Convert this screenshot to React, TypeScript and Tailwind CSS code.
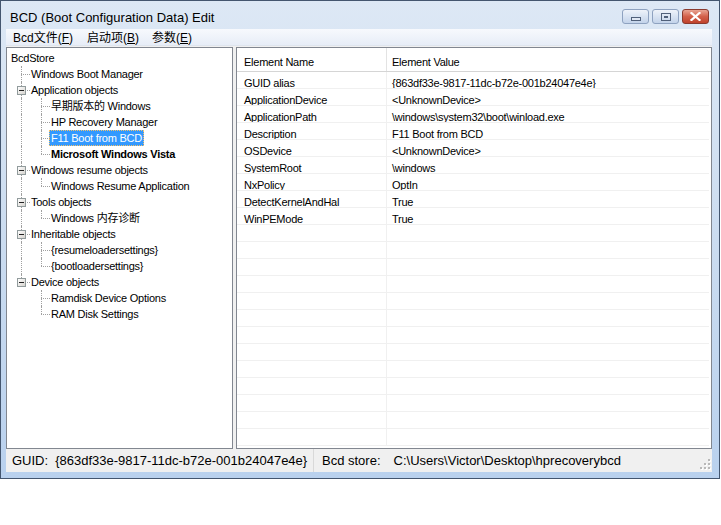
import React from "react";

type Guide = "none" | "pipe" | "tee" | "ell";

type TreeRow = {
  text: string;
  guides: Guide[];
  expander?: boolean;
  bold?: boolean;
  selected?: boolean;
};

const treeRows: TreeRow[] = [
  { text: "BcdStore", guides: [] },
  { text: "Windows Boot Manager", guides: ["tee"] },
  { text: "Application objects", guides: ["tee"], expander: true },
  { text: "早期版本的 Windows", guides: ["pipe", "tee"] },
  { text: "HP Recovery Manager", guides: ["pipe", "tee"] },
  { text: "F11 Boot from BCD", guides: ["pipe", "tee"], selected: true },
  { text: "Microsoft Windows Vista", guides: ["pipe", "ell"], bold: true },
  { text: "Windows resume objects", guides: ["tee"], expander: true },
  { text: "Windows Resume Application", guides: ["pipe", "ell"] },
  { text: "Tools objects", guides: ["tee"], expander: true },
  { text: "Windows 内存诊断", guides: ["pipe", "ell"] },
  { text: "Inheritable objects", guides: ["tee"], expander: true },
  { text: "{resumeloadersettings}", guides: ["pipe", "tee"] },
  { text: "{bootloadersettings}", guides: ["pipe", "ell"] },
  { text: "Device objects", guides: ["ell"], expander: true },
  { text: "Ramdisk Device Options", guides: ["none", "tee"] },
  { text: "RAM Disk Settings", guides: ["none", "ell"] },
];

const elements: [string, string][] = [
  ["GUID alias", "{863df33e-9817-11dc-b72e-001b24047e4e}"],
  ["ApplicationDevice", "<UnknownDevice>"],
  ["ApplicationPath", "\\windows\\system32\\boot\\winload.exe"],
  ["Description", "F11 Boot from BCD"],
  ["OSDevice", "<UnknownDevice>"],
  ["SystemRoot", "\\windows"],
  ["NxPolicy", "OptIn"],
  ["DetectKernelAndHal", "True"],
  ["WinPEMode", "True"],
];

const uiFont = { fontFamily: '"Liberation Sans", "Noto Sans CJK SC", Arial, sans-serif' };

function GuideCell({ kind, expander }: { kind: Guide; expander?: boolean }) {
  return (
    <div className="relative w-[20px] h-[16px] shrink-0">
      {kind !== "none" && (
        <div
          className={
            kind === "ell"
              ? "absolute left-[10px] top-0 h-[8px] border-l border-dotted border-[#a0a0a0]"
              : "absolute left-[10px] top-0 h-[16px] border-l border-dotted border-[#a0a0a0]"
          }
        />
      )}
      {(kind === "tee" || kind === "ell") && (
        <div className="absolute left-[10px] top-[8px] w-[9px] border-t border-dotted border-[#a0a0a0]" />
      )}
      {expander && (
        <div className="absolute left-[6px] top-[4px] w-[9px] h-[9px] border border-[#919b9c] bg-gradient-to-br from-white to-[#d6d3ce] flex items-center justify-center">
          <div className="w-[5px] h-px bg-[#222]" />
        </div>
      )}
    </div>
  );
}

function Tree() {
  return (
    <div className="w-[227px] shrink-0 bg-white border border-[#828790] pt-[2px] pl-[4px] overflow-hidden text-[11px] tracking-[-0.25px] text-black">
      {treeRows.map((r, i) => (
        <div key={i} className="flex h-[16px] items-center">
          {r.guides.map((g, j) => (
            <GuideCell key={j} kind={g} expander={r.expander && j === r.guides.length - 1} />
          ))}
          <span
            className={
              r.selected
                ? "h-[16px] leading-[14px] px-[1px] ml-[-2px] bg-[#3399ff] text-white border border-dotted border-[#f5c26b] whitespace-nowrap"
                : r.bold
                ? "h-[16px] leading-[16px] px-[2px] ml-[-2px] font-bold whitespace-nowrap"
                : "h-[16px] leading-[16px] px-[2px] ml-[-2px] whitespace-nowrap"
            }
          >
            {r.text}
          </span>
        </div>
      ))}
    </div>
  );
}

function ElementList() {
  const rows = Array.from({ length: 22 }, (_, i) => elements[i] ?? ["", ""]);
  return (
    <div className="flex-1 bg-white border border-[#828790] overflow-hidden text-[11px] tracking-[-0.25px] text-black flex flex-col">
      <div className="flex h-[24px] shrink-0 border-b border-[#d5d5d5] bg-white">
        <div className="w-[150px] shrink-0 pl-[7px] pt-[6px] leading-[16px] border-r border-[#e3e3e3]">Element Name</div>
        <div className="flex-1 pl-[5px] pt-[6px] leading-[16px]">Element Value</div>
      </div>
      {rows.map(([k, v], i) => (
        <div key={i} className="flex h-[17px] shrink-0 border-b border-[#f0f0f0] mr-[2px] overflow-hidden">
          <div className="w-[150px] shrink-0 pl-[7px] pt-[5px] leading-[12px] border-r border-[#f0f0f0] whitespace-nowrap">{k}</div>
          <div className="flex-1 pl-[5px] pt-[5px] leading-[12px] whitespace-nowrap">{v}</div>
        </div>
      ))}
    </div>
  );
}

function CaptionButton({ kind }: { kind: "min" | "max" | "close" }) {
  if (kind === "close") {
    return (
      <div className="w-[27px] h-[15px] rounded-[3px] border border-[#8a3a2e] bg-gradient-to-b from-[#e8a493] via-[#d2604a] to-[#c0422c] flex items-center justify-center">
        <svg width="11" height="9" viewBox="0 0 11 9">
          <path d="M1.5 1 L9.5 8 M9.5 1 L1.5 8" stroke="#fff" strokeWidth="2.2" strokeLinecap="square" />
        </svg>
      </div>
    );
  }
  return (
    <div className="w-[27px] h-[15px] rounded-[3px] border border-[#8ea2c0] bg-gradient-to-b from-[#eef3fa] via-[#d8e3f2] to-[#c3d3ea] flex items-center justify-center">
      {kind === "min" ? (
        <div className="w-[10px] h-[4px] mt-[5px] border border-[#50607a] bg-[#dfe7f3]" />
      ) : (
        <div className="w-[10px] h-[8px] border border-[#50607a] flex items-center justify-center">
          <div className="w-[4px] h-[2px] bg-[#50607a]" />
        </div>
      )}
    </div>
  );
}

function SizeGrip() {
  const dots = [
    [8, 0],
    [8, 4],
    [4, 4],
    [8, 8],
    [4, 8],
    [0, 8],
  ];
  return (
    <svg width="11" height="11" viewBox="0 0 11 11" className="self-end mb-[2px] mr-[1px]">
      {dots.map(([x, y], i) => (
        <g key={i}>
          <rect x={x + 1} y={y + 1} width="2" height="2" fill="#fff" />
          <rect x={x} y={y} width="2" height="2" fill="#b8b8b8" />
        </g>
      ))}
    </svg>
  );
}

export default function App() {
  return (
    <div className="w-[721px] h-[525px] bg-white overflow-hidden" style={uiFont}>
      <div className="w-[720px] h-[479px] border border-[#44566f] bg-gradient-to-b from-[#dde8f5] via-[#cbdcf0] to-[#b9d1ee] flex flex-col">
        {/* title bar */}
        <div className="h-[28px] shrink-0 flex items-start justify-between">
          <div className="pl-[9px] pt-[8px] text-[13px] leading-[18px] text-black">BCD (Boot Configuration Data) Edit</div>
          <div className="flex gap-[3px] pt-[8px] pr-[10px]">
            <CaptionButton kind="min" />
            <CaptionButton kind="max" />
            <CaptionButton kind="close" />
          </div>
        </div>

        {/* client area */}
        <div className="flex-1 ml-[5px] mr-[7px] mb-[6px] flex flex-col bg-[#f0f0f0]">
          {/* menu */}
          <div className="h-[17px] shrink-0 flex items-center pt-[2px] bg-gradient-to-b from-[#f7f9fd] to-[#e7edf7] border-b border-[#dfe5ee] text-[12px] text-black">
            <span className="px-[7px]">
              Bcd文件(<span className="underline">F</span>)
            </span>
            <span className="px-[7px]">
              启动项(<span className="underline">B</span>)
            </span>
            <span className="px-[6px]">
              参数(<span className="underline">E</span>)
            </span>
          </div>

          {/* panels */}
          <div className="flex-1 flex gap-[3px] pt-[1px] min-h-0">
            <Tree />
            <ElementList />
          </div>

          {/* status bar */}
          <div className="h-[23px] shrink-0 flex text-[13px] text-black bg-[#f0f0f0]">
            <div className="w-[308px] shrink-0 flex items-center pt-[1px] pl-[6px] border-r border-[#d9d9d9]">
              <span>GUID:</span>
              <span className="ml-[7px]">{"{863df33e-9817-11dc-b72e-001b24047e4e}"}</span>
            </div>
            <div className="flex-1 flex items-center pt-[1px] pl-[8px]">
              <span>Bcd store:</span>
              <span className="ml-[13px]">C:\Users\Victor\Desktop\hprecoverybcd</span>
            </div>
            <SizeGrip />
          </div>
        </div>
      </div>
    </div>
  );
}
